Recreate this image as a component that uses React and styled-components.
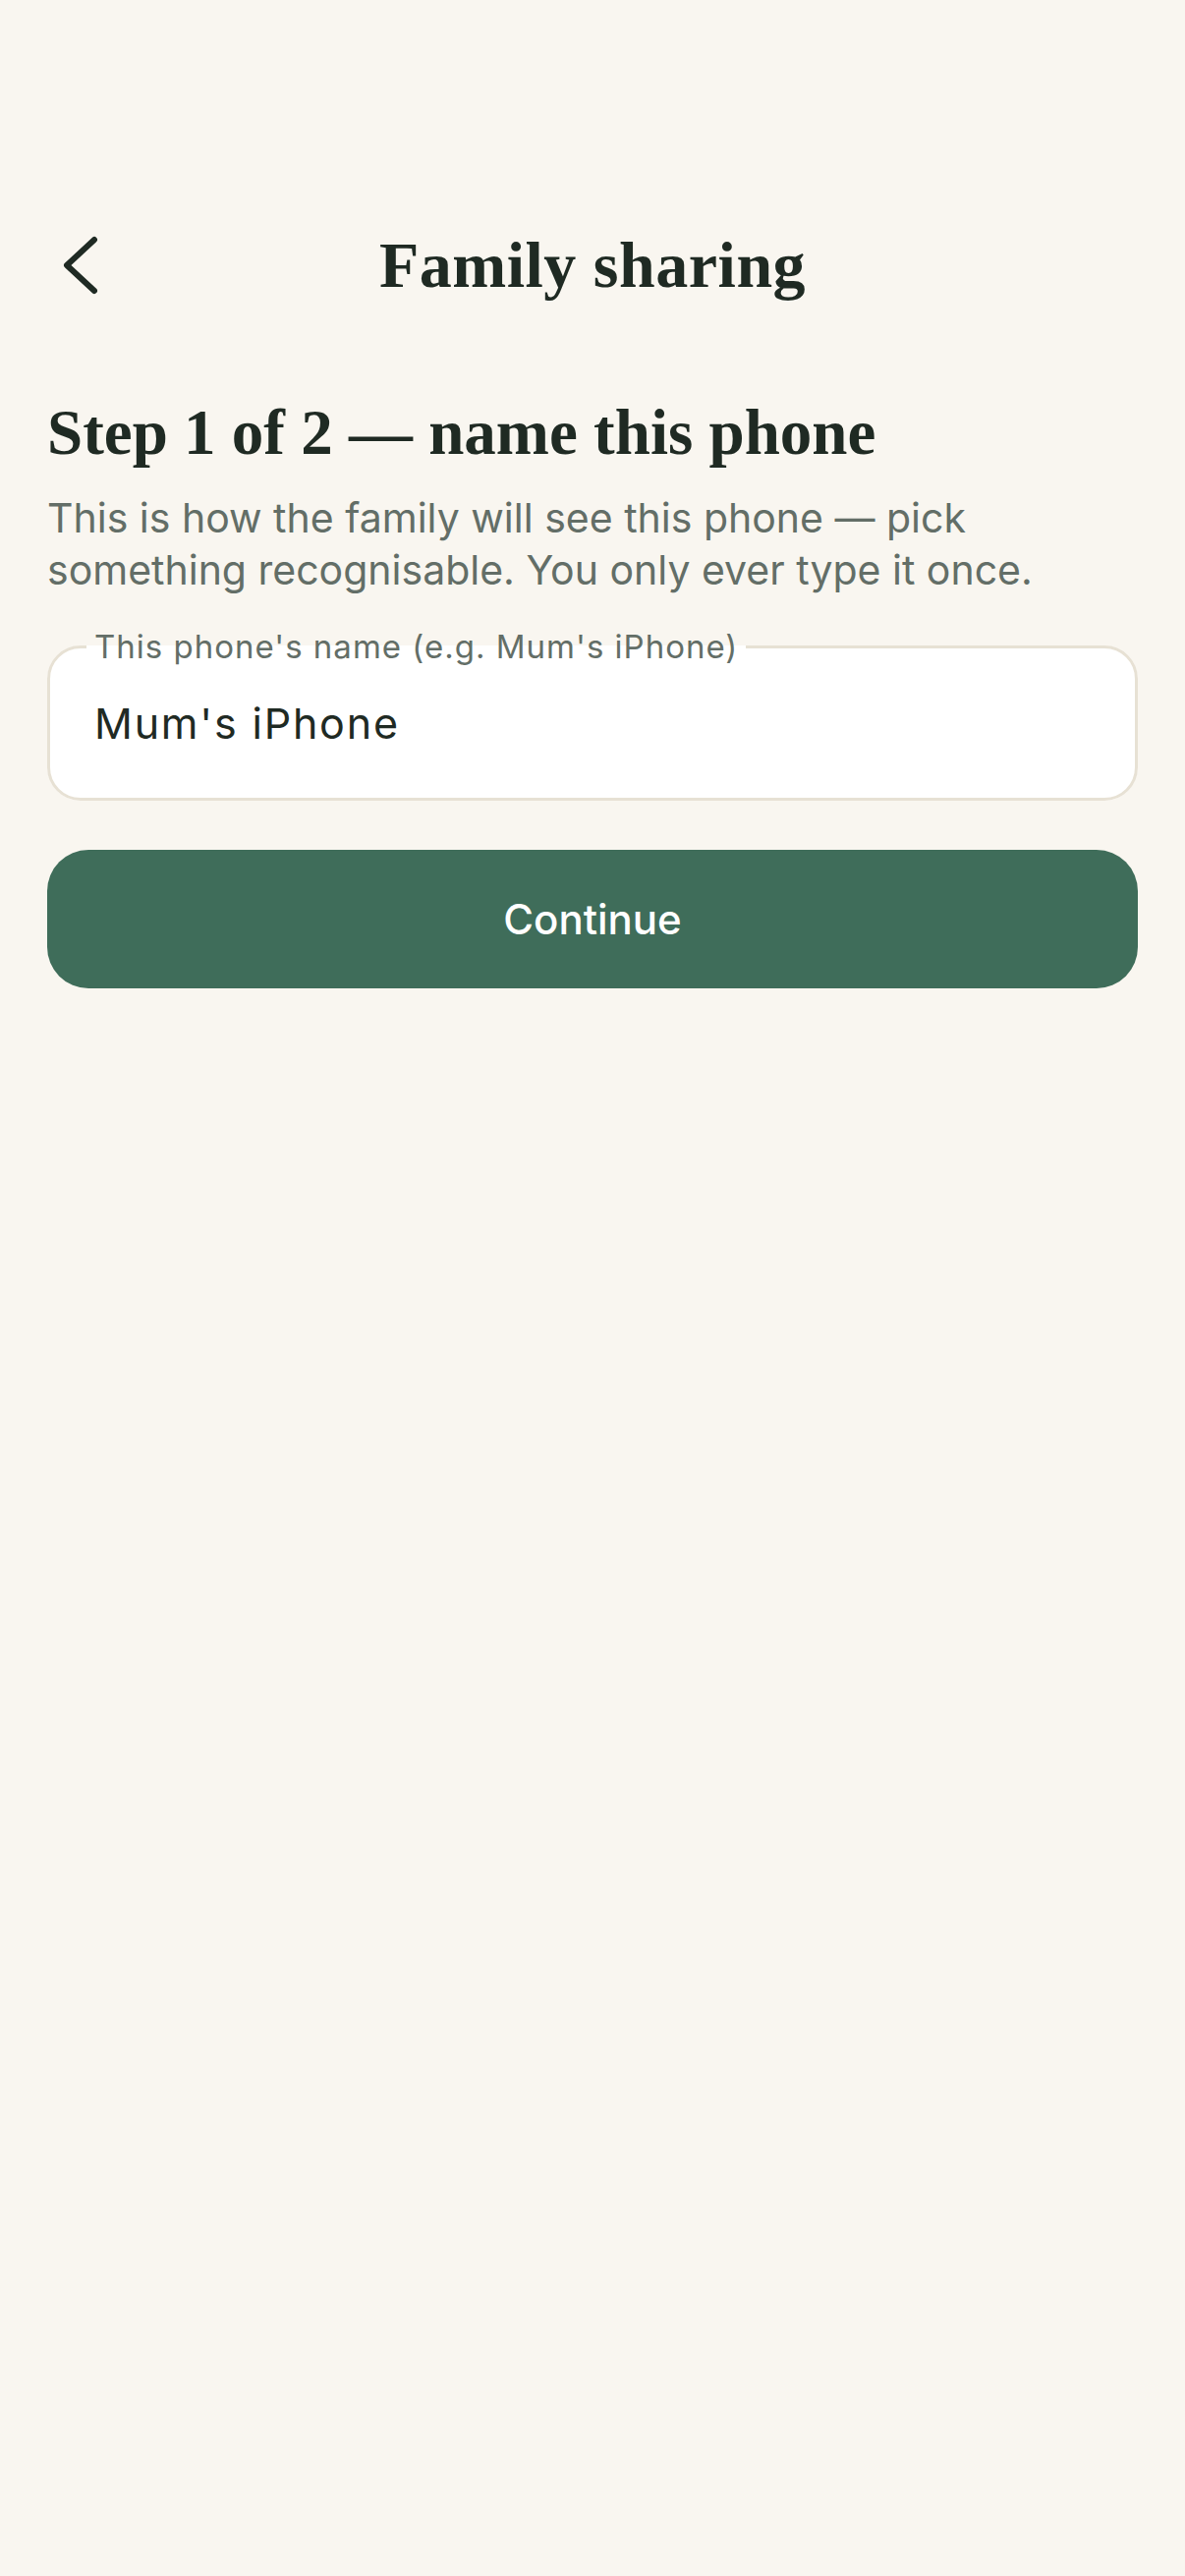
import React, { useState } from "react";
import styled, { createGlobalStyle } from "styled-components";

const Global = createGlobalStyle`
  html, body { margin: 0; padding: 0; background: #f9f6f0; }
  body { font-family: Inter, "Noto Sans", sans-serif; }
  * { box-sizing: border-box; }
`;

const Screen = styled.div`
  min-height: 2622px;
  background: #f9f6f0;
  padding: 200px 48px 0;
`;

const Header = styled.header`
  display: grid;
  grid-template-columns: 120px 1fr 120px;
  align-items: center;
  height: 140px;
`;

const BackButton = styled.button`
  display: flex;
  align-items: center;
  justify-content: flex-start;
  width: 80px;
  height: 80px;
  padding: 0 0 0 16px;
  border: none;
  background: transparent;
  color: #1f2a23;
  cursor: pointer;
`;

const Title = styled.h1`
  margin: 0;
  text-align: center;
  font-family: "Liberation Serif", "DejaVu Serif", serif;
  font-weight: 700;
  font-size: 66px;
  color: #1f2a23;
  letter-spacing: 0.5px;
`;

const Heading = styled.h2`
  margin: 64px 0 0;
  font-family: "Liberation Serif", "DejaVu Serif", serif;
  font-weight: 700;
  font-size: 65px;
  line-height: 72px;
  color: #1f2a23;
  letter-spacing: 0;
`;

const Lead = styled.p`
  margin: 25px 0 0;
  font-family: Inter, "Noto Sans", sans-serif;
  font-size: 41px;
  line-height: 53px;
  color: #636e67;
  letter-spacing: 0;
`;

const Field = styled.fieldset`
  margin: 31px 0 0;
  padding: 0 48px 0 45px;
  border: 3px solid #e7e1d4;
  border-radius: 34px;
  background: #ffffff;
  min-width: 0;
`;

const Legend = styled.legend`
  margin-left: -8px;
  padding: 0 8px;
  font-family: Inter, "Noto Sans", sans-serif;
  font-size: 33px;
  line-height: 40px;
  color: #636e67;
  letter-spacing: 1px;
`;

const Input = styled.input`
  display: block;
  width: 100%;
  height: 152px;
  margin-top: -18px;
  padding: 0;
  border: none;
  outline: none;
  background: transparent;
  font-family: Inter, "Noto Sans", sans-serif;
  font-size: 43px;
  letter-spacing: 1.8px;
  color: #1f2a23;
`;

const PrimaryButton = styled.button`
  display: flex;
  align-items: center;
  justify-content: center;
  width: 100%;
  height: 141px;
  margin-top: 50px;
  border: none;
  border-radius: 42px;
  background: #3f6d5a;
  color: #ffffff;
  font-family: Inter, "Noto Sans", sans-serif;
  font-weight: 500;
  font-size: 42px;
  cursor: pointer;
`;

const ChevronLeft = () => (
  <svg width="36" height="60" viewBox="0 0 36 60" fill="none">
    <path
      d="M32 4 L4 30 L32 56"
      stroke="currentColor"
      strokeWidth="6"
      strokeLinecap="round"
      strokeLinejoin="round"
    />
  </svg>
);

export default function App() {
  const [name, setName] = useState("Mum's iPhone");
  return (
    <>
      <Global />
      <Screen>
        <Header>
          <BackButton aria-label="Back">
            <ChevronLeft />
          </BackButton>
          <Title>Family sharing</Title>
          <span />
        </Header>
        <Heading>Step 1 of 2 — name this phone</Heading>
        <Lead>
          This is how the family will see this phone — pick something
          recognisable. You only ever type it once.
        </Lead>
        <Field>
          <Legend>This phone's name (e.g. Mum's iPhone)</Legend>
          <Input value={name} onChange={(e) => setName(e.target.value)} />
        </Field>
        <PrimaryButton>Continue</PrimaryButton>
      </Screen>
    </>
  );
}
